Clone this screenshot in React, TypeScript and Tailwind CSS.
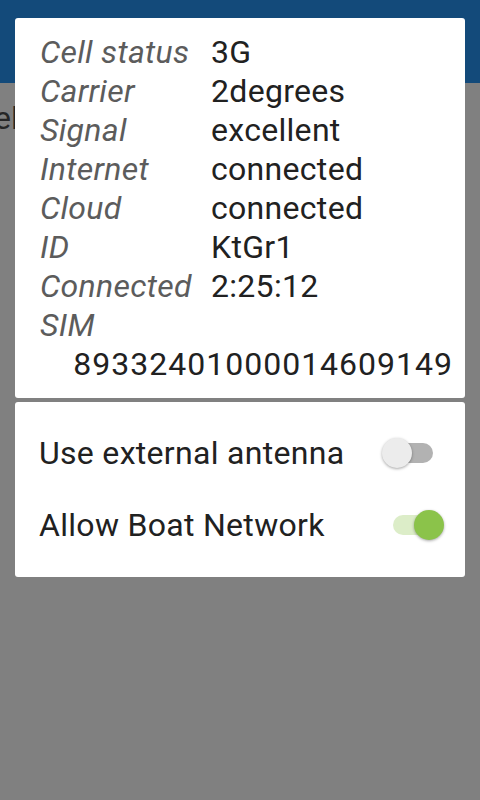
import { useState } from 'react'

interface StatusRow {
  label: string
  value: string
}

const rows: StatusRow[] = [
  { label: 'Cell status', value: '3G' },
  { label: 'Carrier', value: '2degrees' },
  { label: 'Signal', value: 'excellent' },
  { label: 'Internet', value: 'connected' },
  { label: 'Cloud', value: 'connected' },
  { label: 'ID', value: 'KtGr1' },
  { label: 'Connected', value: '2:25:12' },
]

function Toggle({ on, onChange }: { on: boolean; onChange: () => void }) {
  return (
    <button onClick={onChange} className="relative w-[62px] h-[32px] shrink-0">
      <span
        className={`absolute left-[11px] top-[6px] w-[40px] h-[20px] rounded-full ${on ? 'bg-[#dcedc8]' : 'bg-[#b2b2b2]'}`}
      />
      <span
        className={`absolute top-[1px] w-[30px] h-[30px] rounded-full shadow-[0_1px_3px_rgba(0,0,0,0.35)] ${on ? 'left-[32px] bg-[#8bc34a]' : 'left-0 bg-[#ececec]'}`}
      />
    </button>
  )
}

export default function App() {
  const [antenna, setAntenna] = useState(false)
  const [boat, setBoat] = useState(true)

  return (
    <div className="relative w-[480px] h-[800px] overflow-hidden bg-[#808080] font-['Roboto',sans-serif]">
      {/* page behind the dialog, already dimmed */}
      <div className="h-[83px] bg-[#134a7a]" />
      <div className="pt-[18px] -ml-[6px] text-[32px] leading-[34px] text-[#262626]">el</div>

      {/* dialog */}
      <div className="absolute top-[18px] left-[15px] right-[15px] flex flex-col gap-[4px]">
        <div className="bg-white rounded-[3px] pt-[15px] pb-[14px] pl-[25px] pr-[13px] text-[32px] leading-[39px] tracking-[0.3px]">
          {rows.map((row) => (
            <div key={row.label} className="flex">
              <span className="w-[171px] shrink-0 italic text-[#5c5c5c]">{row.label}</span>
              <span className="text-[#212121]">{row.value}</span>
            </div>
          ))}
          <div className="italic text-[#5c5c5c]">SIM</div>
          <div className="text-right text-[#212121] tracking-[1px] -mr-[1px]">89332401000014609149</div>
        </div>

        <div className="bg-white rounded-[3px] pt-[15px] pb-[16px] pl-[24px] pr-[21px] text-[32px] tracking-[0.3px] text-[#212121]">
          <div className="flex items-center justify-between h-[72px]">
            <span>Use external antenna</span>
            <Toggle on={antenna} onChange={() => setAntenna(!antenna)} />
          </div>
          <div className="flex items-center justify-between h-[72px]">
            <span>Allow Boat Network</span>
            <Toggle on={boat} onChange={() => setBoat(!boat)} />
          </div>
        </div>
      </div>
    </div>
  )
}
